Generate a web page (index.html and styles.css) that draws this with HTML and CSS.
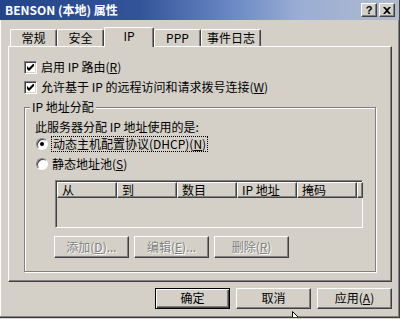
FILE: index.html
```html
<!DOCTYPE html>
<html lang="zh-CN">
<head>
<meta charset="utf-8">
<title>BENSON (本地) 属性</title>
<link rel="stylesheet" href="styles.css">
</head>
<body>
<div class="win">
  <div class="title">
    <span class="title-text">BENSON (本地) 属性</span>
    <div class="tbtns">
      <span class="tbtn">?</span>
      <span class="tbtn"><svg width="8" height="7" viewBox="0 0 8 7"><path d="M0 0h2l2 2 2-2h2L5 3.5 8 7H6L4 5 2 7H0l3-3.5z" fill="#000"/></svg></span>
    </div>
  </div>
  <div class="client">
    <div class="tabs">
      <div class="tab">常规</div>
      <div class="tab">安全</div>
      <div class="tab sel">IP</div>
      <div class="tab">PPP</div>
      <div class="tab">事件日志</div>
    </div>
    <div class="panel">
      <div class="chk"><span class="box"><svg width="7" height="7" viewBox="0 0 7 7"><path d="M0 2v3l2 2 5-5V-1L2 4z" fill="#000"/></svg></span><span>启用 IP 路由(<u>R</u>)</span></div>
      <div class="chk"><span class="box"><svg width="7" height="7" viewBox="0 0 7 7"><path d="M0 2v3l2 2 5-5V-1L2 4z" fill="#000"/></svg></span><span>允许基于 IP 的远程访问和请求拨号连接(<u>W</u>)</span></div>
      <fieldset class="group">
        <legend>IP 地址分配</legend>
        <div class="desc">此服务器分配 IP 地址使用的是:</div>
        <div class="radio first"><span class="dot on"></span><span class="focus">动态主机配置协议(DHCP)(<u>N</u>)</span></div>
        <div class="radio second"><span class="dot"></span><span class="rlabel">静态地址池(<u>S</u>)</span></div>
        <div class="list">
          <div class="hdr">
            <div class="hc">从</div>
            <div class="hc">到</div>
            <div class="hc">数目</div>
            <div class="hc">IP 地址</div>
            <div class="hc">掩码</div>
            <div class="hc rest"></div>
          </div>
        </div>
        <div class="btnrow">
          <div class="btn dis">添加(<u>D</u>)...</div>
          <div class="btn dis">编辑(<u>E</u>)...</div>
          <div class="btn dis">删除(<u>R</u>)</div>
        </div>
      </fieldset>
    </div>
    <div class="footer">
      <div class="btn def">确定</div>
      <div class="btn">取消</div>
      <div class="btn">应用(<u>A</u>)</div>
    </div>
  </div>
  <svg class="cursor" width="12" height="19" viewBox="0 0 12 19"><path d="M0.5 0.5V16.5L4.5 12.5L7 18L9 17L6.5 11.5H11.5Z" fill="#fff" stroke="#000" stroke-width="1"/></svg>
</div>
</body>
</html>
```
FILE: styles.css
```css
* { box-sizing: border-box; }
html, body { margin: 0; padding: 0; }
body {
  width: 400px;
  height: 319px;
  overflow: hidden;
  background: #d4d0c8;
  font-family: "Noto Sans CJK SC", "Liberation Sans", sans-serif;
  font-size: 12px;
  line-height: 16px;
  color: #000;
}
u { text-decoration: underline; text-underline-offset: 1px; }

.win {
  position: relative;
  width: 400px;
  height: 318px;
  background: #d4d0c8;
  border-right: 1px solid #404040;
  border-bottom: 1px solid #404040;
  box-shadow: inset -1px -1px #808080, inset 1px 0 #fff;
  display: flex;
  flex-direction: column;
  overflow: hidden;
}

.title {
  height: 20px;
  flex: none;
  display: flex;
  align-items: center;
  padding: 0 4px 0 4px;
  background: linear-gradient(90deg, #24448a 0%, #34549a 35%, #6a88c4 58%, #9aaed4 75%, #b0bacc 100%);
  color: #fff;
  font-weight: bold;
  line-height: 14px;
}
.title-text { flex: 1; padding-left: 1px; }
.tbtns { display: flex; gap: 2px; }
.tbtn {
  width: 16px;
  height: 14px;
  background: #d4d0c8;
  border: 1px solid;
  border-color: #fff #404040 #404040 #fff;
  box-shadow: inset -1px -1px #808080;
  display: flex;
  align-items: center;
  justify-content: center;
  color: #000;
  font: bold 11px/1 "Liberation Sans", sans-serif;
}

.client {
  flex: 1;
  padding: 7px 7px 0 8px;
  display: flex;
  flex-direction: column;
}

.tabs {
  display: flex;
  align-items: flex-end;
  height: 19px;
  padding-left: 2px;
}
.tab {
  height: 17px;
  min-width: 47px;
  padding: 0 5px;
  text-align: center;
  border-top: 1px solid #fff;
  border-left: 1px solid #fff;
  border-right: 1px solid #404040;
  box-shadow: inset -1px 0 #808080;
  border-top-left-radius: 2px;
  border-top-right-radius: 2px;
  line-height: 16px;
  background: #d4d0c8;
}
.tab.sel {
  position: relative;
  z-index: 1;
  height: 20px;
  min-width: 50px;
  margin-bottom: -1px;
}

.panel {
  height: 236px;
  flex: none;
  border: 1px solid;
  border-color: #fff #404040 #404040 #fff;
  box-shadow: inset -1px -1px #808080;
  padding: 10px 0 0 15px;
}

.chk {
  display: flex;
  align-items: center;
  height: 20px;
  gap: 4px;
}
.box {
  width: 13px;
  height: 13px;
  flex: none;
  background: #fff;
  border: 1px solid;
  border-color: #808080 #fff #fff #808080;
  box-shadow: inset 1px 1px #404040, inset -1px -1px #d4d0c8;
  display: flex;
  align-items: center;
  justify-content: center;
}

.group {
  margin: 4px 0 0 0;
  width: 352px;
  height: 171px;
  border: 1px solid #808080;
  box-shadow: 1px 1px 0 #fff, inset 1px 1px 0 #fff;
  padding: 6px 0 0 10px;
  min-inline-size: 0;
}
.group legend {
  padding: 0 2px;
  margin-left: -5px;
  line-height: 12px;
  background: #d4d0c8;
}
.desc { height: 16px; }

.radio {
  display: flex;
  align-items: center;
  height: 16px;
  gap: 3px;
  padding-left: 1px;
}
.radio.first { margin-top: 1px; }
.radio.second { margin-top: 4px; }
.dot {
  width: 12px;
  height: 12px;
  flex: none;
  border-radius: 50%;
  background: #fff;
  border: 1px solid;
  border-color: #808080 #fff #fff #808080;
  box-shadow: inset 1px 1px #404040;
  display: flex;
  align-items: center;
  justify-content: center;
}
.dot.on::after {
  content: "";
  width: 4px;
  height: 4px;
  border-radius: 50%;
  background: #000;
}
.focus {
  border: 1px dotted #000;
  padding: 0 1px;
  line-height: 14px;
}
.rlabel { padding-left: 1px; }

.list {
  margin: 8px 0 0 20px;
  width: 308px;
  height: 48px;
  border: 1px solid;
  border-color: #808080 #fff #fff #808080;
  box-shadow: inset 1px 1px #404040, inset -1px -1px #d4d0c8;
  padding: 1px;
  background: #d4d0c8;
}
.hdr { display: flex; height: 16px; }
.hc {
  width: 60px;
  flex: none;
  border: 1px solid;
  border-color: #fff #404040 #404040 #fff;
  box-shadow: inset -1px -1px #808080;
  padding-left: 4px;
  line-height: 13px;
}
.hc.rest { width: auto; flex: 1; }

.btnrow {
  display: flex;
  gap: 5px;
  margin: 8px 0 0 19px;
}
.btn {
  width: 75px;
  height: 22px;
  border: 1px solid;
  border-color: #fff #404040 #404040 #fff;
  box-shadow: inset -1px -1px #808080;
  background: #d4d0c8;
  text-align: center;
  line-height: 19px;
}
.btn.dis {
  color: #808080;
  text-shadow: 1px 1px 0 #fff;
}
.footer {
  display: flex;
  justify-content: flex-end;
  gap: 6px;
  margin-top: 6px;
}
.footer .btn { height: 21px; line-height: 18px; }
.btn.def {
  border: 1px solid #000;
  box-shadow: inset 1px 1px #fff, inset -1px -1px #404040, inset -2px -2px #808080;
}

.cursor {
  position: absolute;
  left: 292px;
  top: 311px;
}
```
